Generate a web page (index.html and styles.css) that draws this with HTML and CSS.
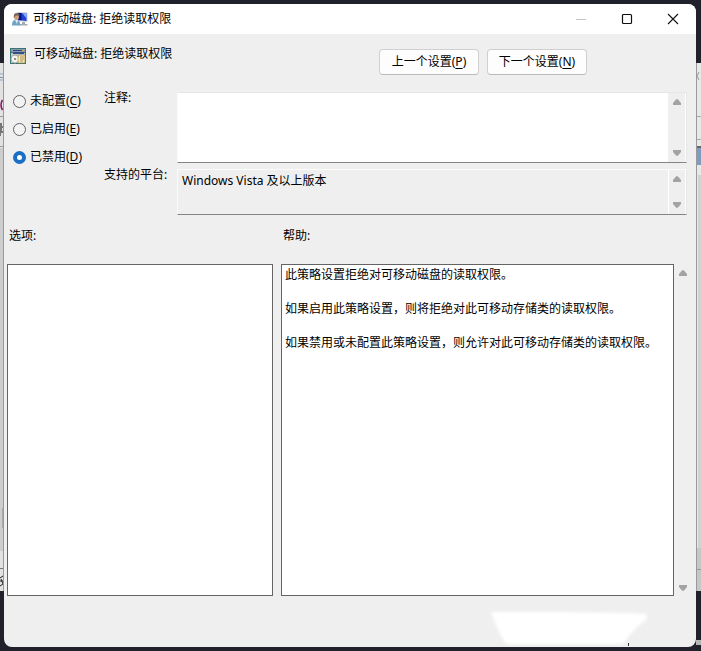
FILE: index.html
```html
<!DOCTYPE html>
<html lang="zh-CN">
<head>
<meta charset="utf-8">
<meta name="viewport" content="width=device-width, initial-scale=1">
<title>可移动磁盘: 拒绝读取权限</title>
<link rel="stylesheet" href="styles.css">
</head>
<body>
<svg width="0" height="0" class="sprite" aria-hidden="true">
  <symbol id="up" viewBox="0 0 8 6"><path d="M3.2.3h1.6L8 4v2H0V4z" fill="#a3a3a3"/></symbol>
  <symbol id="down" viewBox="0 0 8 6"><path d="M0 0h8v2L4.8 5.7H3.2L0 2z" fill="#a3a3a3"/></symbol>
</svg>
<div class="desktop">
  <svg class="edge edge-left" aria-hidden="true">
    <rect y="63" width="4" height="528" fill="#e2e2e2"/>
    <path d="M0 74h3M0 80h3" stroke="#8aa9cb"/>
    <path d="M0 77.500h4" stroke="#8c8c8c"/>
    <path d="M2.500 100Q-.5 105 2.500 110" fill="none" stroke="#8a1060" stroke-width="1.500"/>
    <path d="M0 116.500h4M0 146.500h4" stroke="#999"/>
    <path d="M0 123h2v3h2v2H2v3h2v2H1v3H0z" fill="#777"/>
    <rect y="148" width="4" height="403" fill="#cdcdcd"/>
    <rect x="2" y="508" width="2" height="20" fill="#a9a9a9"/>
    <path d="M0 568.500h4" stroke="#777"/>
    <path d="M0 578l3-2M0 581h3M1 579l2 5-3 2" fill="none" stroke="#222"/>
    <path d="M3.500 63v528" stroke="#999"/>
  </svg>
  <main class="window">
    <header class="titlebar">
      <svg class="app-icon" viewBox="0 0 16 16" aria-hidden="true">
        <path d="M5 1l10.500.5V11L5 10z" fill="#c9ccd3"/>
        <path d="M6 2l8.500.5V10L6 9z" fill="#1f42d2"/>
        <path d="M6 2h3.500v7.300L6 9z" fill="#07158c"/>
        <path d="M10.500 2.300l4 .2v5z" fill="#8fb2f5"/>
        <path d="M10 11h3v2h2.500v1.500H7.500V13H10z" fill="#a7abb2"/>
        <path d="M0 14.500Q0 8.500 4 8.500t4.500 6z" fill="#6ea3c6"/>
        <path d="M3 9h3l-1 4z" fill="#e2eef5"/>
        <ellipse cx="4.500" cy="6" rx="2.500" ry="3" fill="#caa07e"/>
        <path d="M1.800 7q-.5-5 2.700-5t3 3L4 4.500z" fill="#7d6757"/>
      </svg>
      <h1 class="title">可移动磁盘: 拒绝读取权限</h1>
      <div class="caption">
        <button class="cap" type="button" aria-label="最小化" disabled><svg viewBox="0 0 12 12"><path d="M1 6.500h10" stroke="#c4c4c4"/></svg></button>
        <button class="cap" type="button" aria-label="最大化"><svg viewBox="0 0 12 12"><rect x="1.500" y="1.500" width="9" height="9" rx="1" fill="none" stroke="#111" stroke-width="1.200"/></svg></button>
        <button class="cap" type="button" aria-label="关闭"><svg viewBox="0 0 12 12"><path d="M1 1l10 10M11 1L1 11" stroke="#111" stroke-width="1.100"/></svg></button>
      </div>
    </header>

    <section class="heading">
      <svg class="policy-icon" viewBox="0 0 16 16" aria-hidden="true">
        <path d="M0 0h16v16H0z" fill="#3b7478"/>
        <path d="M1 1h14v3H1z" fill="#8f9aa6"/>
        <path d="M3 2h9v1H3z" fill="#22458b"/><path d="M12 2h2v1h-2z" fill="#e0aa32"/>
        <path d="M1 5h14v10H1z" fill="#c4c8c6"/>
        <path d="M3 4h11v2H3z" fill="#344f8a"/>
        <circle cx="5" cy="11" r="4" fill="#f4f4ee" stroke="#a7aba7"/>
        <circle cx="5" cy="11" r="1" fill="#687070"/>
        <path d="M9 7h6v8H8V9z" fill="#f8e8ac" stroke="#94814a" stroke-width=".6"/>
        <path d="M10 9h4M10 11h4M10 13h3" stroke="#847442" stroke-width=".7"/>
      </svg>
      <h2 class="policy-name">可移动磁盘: 拒绝读取权限</h2>
      <nav class="pager">
        <button class="btn" type="button">上一个设置(<u>P</u>)</button>
        <button class="btn" type="button">下一个设置(<u>N</u>)</button>
      </nav>
    </section>

    <section class="settings">
      <div class="states" role="radiogroup" aria-label="状态">
        <label class="state"><input type="radio" name="state"><span>未配置(<u>C</u>)</span></label>
        <label class="state"><input type="radio" name="state"><span>已启用(<u>E</u>)</span></label>
        <label class="state"><input type="radio" name="state" checked><span>已禁用(<u>D</u>)</span></label>
      </div>
      <div class="fields">
        <label class="field-label" for="comment">注释:</label>
        <div class="field comment">
          <textarea id="comment"></textarea>
          <div class="scroll" aria-hidden="true"><svg><use href="#up"/></svg><svg><use href="#down"/></svg></div>
        </div>
        <label class="field-label" for="platform">支持的平台:</label>
        <div class="field platform">
          <textarea id="platform" readonly>Windows Vista 及以上版本</textarea>
          <div class="scroll" aria-hidden="true"><svg><use href="#up"/></svg><svg><use href="#down"/></svg></div>
        </div>
      </div>
    </section>

    <section class="panes">
      <div class="pane-group options">
        <h3 class="pane-title">选项:</h3>
        <div class="pane"></div>
      </div>
      <div class="pane-group help">
        <h3 class="pane-title">帮助:</h3>
        <div class="pane">
          <p>此策略设置拒绝对可移动磁盘的读取权限。</p>
          <p>如果启用此策略设置，则将拒绝对此可移动存储类的读取权限。</p>
          <p>如果禁用或未配置此策略设置，则允许对此可移动存储类的读取权限。</p>
        </div>
      </div>
      <div class="scroll pane-scroll" aria-hidden="true"><svg><use href="#up"/></svg><svg><use href="#down"/></svg></div>
    </section>

    <footer class="footer">
      <svg class="smudge" viewBox="0 0 164 38" aria-hidden="true">
        <defs><filter id="soft"><feGaussianBlur stdDeviation="1.500"/></filter></defs>
        <path d="M4 3L70 3l70 1 19 1 1 5-9 7-10 11-5 7H19l-6-10-4-9z" fill="#fff" filter="url(#soft)"/>
        <path d="M141.500 34v3" stroke="#333"/>
      </svg>
    </footer>
  </main>
  <svg class="edge edge-right" aria-hidden="true">
    <rect y="63" width="5" height="528" fill="#e8e8e8"/>
    <path d="M3 72l-2 4 2 4" fill="none" stroke="#999"/>
    <path d="M0 116.500h5M0 139.500h5" stroke="#aaa"/>
    <path d="M0 147h5" stroke="#666" stroke-width="2"/>
    <rect y="148" width="5" height="17" fill="#7e9bc0"/>
    <rect x="2" y="175" width="3" height="373" fill="#d2d2d2"/>
    <rect y="548" width="5" height="43" fill="#c6c6c6"/>
    <path d="M0 569.500h5" stroke="#999"/>
    <rect y="640" width="5" height="5" fill="#b5b5b5"/>
    <path d="M.5 63v528" stroke="#999"/>
  </svg>
</div>
</body>
</html>
```
FILE: styles.css
```css
* { box-sizing: border-box; }

body {
  margin: 0;
  background: #20212a;
  color: #000;
  font: 12px/16px "Noto Sans", "Noto Sans CJK SC", sans-serif;
}

h1, h2, h3, p { margin: 0; font: inherit; }
button, textarea { font: inherit; color: inherit; }
svg { display: block; }
.sprite { position: absolute; }
u { text-underline-offset: 2px; }

.desktop { display: flex; min-height: 100vh; }
.edge { flex: none; align-self: stretch; height: auto; }
.edge-left { width: 4px; }
.edge-right { width: 5px; }

.window {
  flex: 1;
  min-width: 0;
  display: flex;
  flex-direction: column;
  margin: 4px 0;
  border-radius: 8px;
  overflow: hidden;
  background: #efefef;
}

.titlebar {
  display: flex;
  align-items: center;
  height: 30px;
  padding-left: 8px;
  background: #fff;
}
.app-icon { width: 16px; height: 16px; margin-right: 5px; }
.caption { display: flex; height: 100%; margin-left: auto; }
.cap {
  display: grid;
  place-items: center;
  width: 46px;
  padding: 0;
  border: 0;
  background: none;
}
.cap svg { width: 12px; height: 12px; }

.heading {
  display: flex;
  align-items: flex-start;
  padding: 12px 109px 0 6px;
}
.policy-icon { width: 16px; height: 16px; margin: 2px 8px 0 0; }
.pager { display: flex; gap: 8px; margin: 3px 0 0 auto; }
.btn {
  width: 100px;
  height: 26px;
  padding: 0;
  border: 1px solid #cfcfcf;
  border-bottom-color: #bababa;
  border-radius: 4px;
  background: #fdfdfd;
  white-space: nowrap;
}

.settings { display: flex; padding: 17px 9px 0; }
.states {
  display: flex;
  flex-direction: column;
  gap: 10px;
  width: 91px;
}
.state { display: flex; align-items: center; gap: 4px; line-height: 18px; }
.state input {
  appearance: none;
  width: 13px;
  height: 13px;
  margin: 0;
  border: 1px solid #606060;
  border-radius: 50%;
  background: #f3f3f3;
}
.state input:checked { border: 4px solid #1a6fc4; background: #fff; }

.fields {
  flex: 1;
  display: grid;
  grid-template-columns: 73px 1fr;
  row-gap: 6px;
}
.field-label { margin-top: -2px; }
.field {
  display: flex;
  border: 1px solid #e6e6e6;
  border-left-color: #fafafa;
  border-bottom-color: #858585;
}
.comment { height: 71px; background: #fff; }
.platform { height: 46px; border-top-color: #fafafa; }
.field textarea {
  flex: 1;
  min-width: 0;
  padding: 3px 4px;
  border: 0;
  outline: 0;
  background: none;
  resize: none;
  overflow: hidden;
}

.scroll {
  display: flex;
  flex-direction: column;
  justify-content: space-between;
  align-items: center;
  width: 18px;
  padding: 6px 0;
  background: #efefef;
}
.scroll svg { width: 8px; height: 6px; }
.comment .scroll { border-right: 1px solid #fff; }
.platform .scroll { border: solid #fff; border-width: 0 1px; }

.panes { flex: 1; display: flex; padding: 13px 4px 0 3px; }
.pane-group { display: flex; flex-direction: column; }
.options { flex: 266 1 0; margin-right: 8px; }
.help { flex: 393 1 0; }
.pane-title { padding: 0 2px; margin-bottom: 20px; }
.pane {
  flex: 1;
  padding: 1px 3px;
  border: 1px solid #646464;
  background: #fff;
}
.pane p { line-height: 17px; margin-bottom: 17px; }
.pane-scroll { margin-top: 36px; padding: 6px 0 5px; }

.footer { display: flex; justify-content: flex-end; padding: 13px 45px 0 0; }
.smudge { width: 164px; height: 38px; }
```
